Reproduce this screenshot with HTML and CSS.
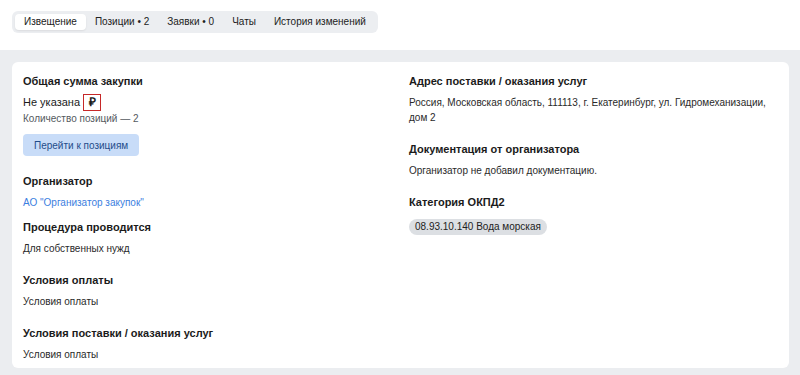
FILE: index.html
```html
<!DOCTYPE html>
<html lang="ru">
<head>
<meta charset="utf-8">
<link rel="stylesheet" href="styles.css">
</head>
<body>
<header class="top">
  <nav class="tabs">
    <span class="tab tab-active">Извещение</span>
    <span class="tab">Позиции • 2</span>
    <span class="tab">Заявки • 0</span>
    <span class="tab">Чаты</span>
    <span class="tab">История изменений</span>
  </nav>
</header>
<main class="page">
  <section class="card">
    <div class="col">
      <div class="block">
        <h3 class="title">Общая сумма закупки</h3>
        <div class="sum">Не указана <span class="rub">₽</span></div>
        <div class="muted">Количество позиций — 2</div>
        <button class="btn">Перейти к позициям</button>
      </div>
      <div class="block block-tight">
        <div class="item">
          <h3 class="title">Организатор</h3>
          <a class="link">АО "Организатор закупок"</a>
        </div>
        <div class="item">
          <h3 class="title">Процедура проводится</h3>
          <p class="text">Для собственных нужд</p>
        </div>
      </div>
      <div class="block">
        <h3 class="title">Условия оплаты</h3>
        <p class="text">Условия оплаты</p>
      </div>
      <div class="block">
        <h3 class="title">Условия поставки / оказания услуг</h3>
        <p class="text">Условия оплаты</p>
      </div>
    </div>
    <div class="col">
      <div class="block">
        <h3 class="title">Адрес поставки / оказания услуг</h3>
        <p class="text">Россия, Московская область, 111113, г. Екатеринбург, ул. Гидромеханизации, дом 2</p>
      </div>
      <div class="block">
        <h3 class="title">Документация от организатора</h3>
        <p class="text">Организатор не добавил документацию.</p>
      </div>
      <div class="block">
        <h3 class="title">Категория ОКПД2</h3>
        <div><span class="chip">08.93.10.140 Вода морская</span></div>
      </div>
    </div>
  </section>
</main>
</body>
</html>
```
FILE: styles.css
```css
* { box-sizing: border-box; }
html, body { margin: 0; padding: 0; }
body {
  font-family: "Liberation Sans", Arial, sans-serif;
  color: #1b1b1b;
  background: #ebedf0;
  width: 800px;
  height: 375px;
  overflow: hidden;
}
.top {
  background: #ffffff;
  height: 50px;
  padding: 11px 12px 0;
}
.tabs {
  display: inline-flex;
  background: #eceef1;
  border-radius: 6px;
  padding: 3px;
  height: 22px;
}
.tab {
  font-size: 10px;
  line-height: 16px;
  height: 16px;
  padding: 0 9px;
  color: #222;
  border-radius: 4px;
  white-space: nowrap;
}
.tab-active {
  background: #ffffff;
  box-shadow: 0 1px 2px rgba(0,0,0,0.08);
}
.page {
  padding: 12px 11px 0 12px;
}
.card {
  background: #ffffff;
  border-radius: 6px;
  padding: 11px 11px 9px;
  display: grid;
  grid-template-columns: 1fr 1fr;
  column-gap: 17px;
  height: 306px;
}
.col {
  display: flex;
  flex-direction: column;
  gap: 16px;
}
.block {
  display: flex;
  flex-direction: column;
}
.block-tight {
  gap: 9px;
  margin-top: 1px;
}
.item { display: flex; flex-direction: column; }
.title {
  margin: 0 0 6px;
  font-size: 11px;
  line-height: 16px;
  font-weight: bold;
  color: #1b1b1b;
}
.text {
  margin: 0;
  font-size: 10px;
  line-height: 15px;
  color: #2a2a2a;
}
.sum {
  display: flex;
  align-items: center;
  gap: 3px;
  font-size: 11px;
  line-height: 17px;
  color: #1b1b1b;
  margin-top: -1px;
}
.rub {
  display: inline-block;
  border: 1px solid #c62828;
  width: 18px;
  height: 17px;
  text-align: center;
  line-height: 15px;
  font-weight: bold;
  font-size: 12px;
}
.muted {
  font-size: 10px;
  line-height: 15px;
  color: #555a60;
}
.btn {
  align-self: flex-start;
  margin-top: 8px;
  height: 22px;
  padding: 0 11px;
  border: none;
  border-radius: 4px;
  background: #c8dcf8;
  color: #1f4c8a;
  font-family: inherit;
  font-size: 10px;
}
.link {
  font-size: 10px;
  line-height: 15px;
  color: #3b7ee0;
}
.chip {
  display: inline-block;
  background: #dcdfe3;
  border-radius: 8px;
  padding: 0 6px;
  font-size: 10px;
  line-height: 16px;
  color: #222;
  margin-top: -1px;
}
```
